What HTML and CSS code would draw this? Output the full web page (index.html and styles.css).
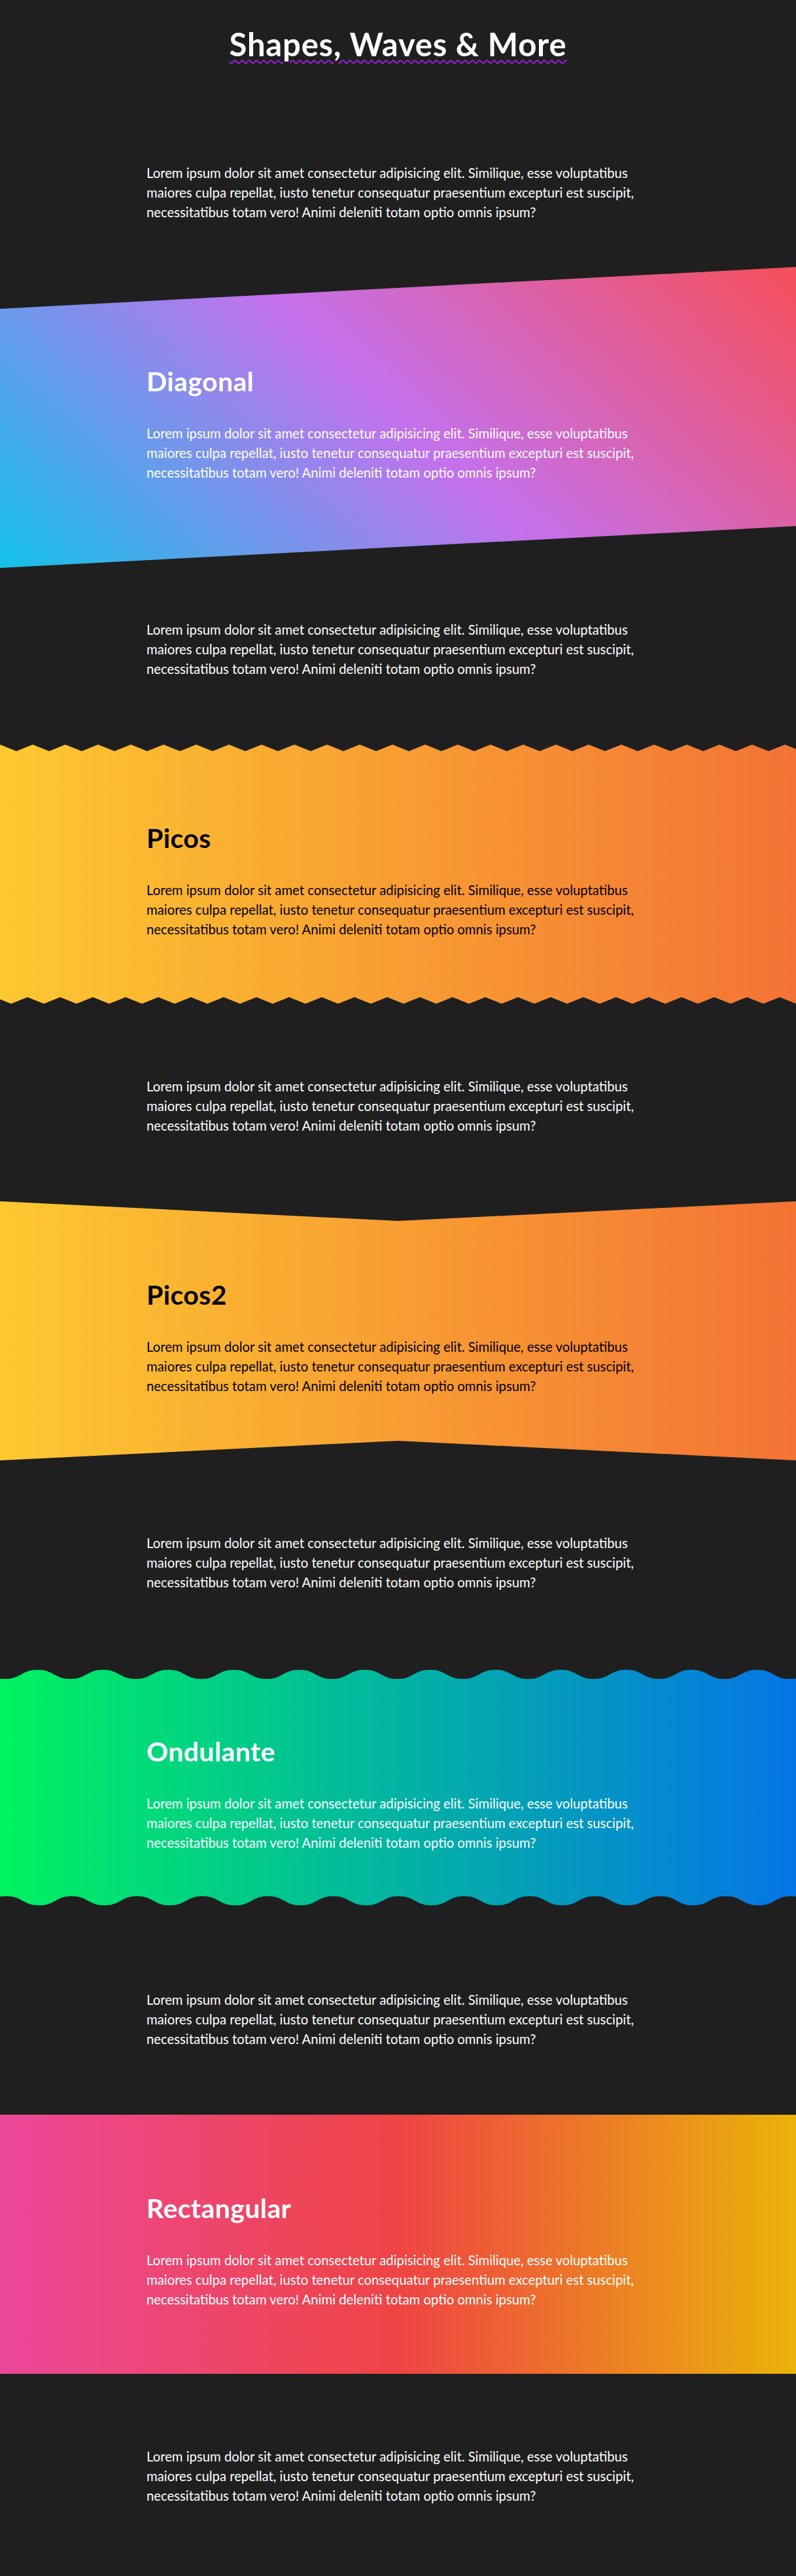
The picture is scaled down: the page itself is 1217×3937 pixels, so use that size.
FILE: index.html
```html
<!DOCTYPE html>
<html lang="es">
<head>
<meta charset="utf-8">
<title>Shapes, Waves &amp; More</title>
<link rel="stylesheet" href="styles.css">
</head>
<body>
<header class="page-header">
  <h1 class="page-title">Shapes, Waves &amp; More</h1>
</header>

<section class="band band--plain">
  <div class="container">
    <p class="copy">Lorem ipsum dolor sit amet consectetur adipisicing elit. Similique, esse voluptatibus maiores culpa repellat, iusto tenetur consequatur praesentium excepturi est suscipit, necessitatibus totam vero! Animi deleniti totam optio omnis ipsum?</p>
  </div>
</section>

<section class="band band--shape band--diagonal">
  <div class="container">
    <h2 class="band-title">Diagonal</h2>
    <p class="copy">Lorem ipsum dolor sit amet consectetur adipisicing elit. Similique, esse voluptatibus maiores culpa repellat, iusto tenetur consequatur praesentium excepturi est suscipit, necessitatibus totam vero! Animi deleniti totam optio omnis ipsum?</p>
  </div>
</section>

<section class="band band--plain">
  <div class="container">
    <p class="copy">Lorem ipsum dolor sit amet consectetur adipisicing elit. Similique, esse voluptatibus maiores culpa repellat, iusto tenetur consequatur praesentium excepturi est suscipit, necessitatibus totam vero! Animi deleniti totam optio omnis ipsum?</p>
  </div>
</section>

<section class="band band--shape band--picos">
  <svg class="edge edge--top edge--zigzag" height="10" aria-hidden="true">
    <defs><pattern id="zz-top" width="50" height="10" patternUnits="userSpaceOnUse"><path d="M0 0H50L25 10Z" class="edge-fill"/></pattern></defs>
    <rect width="100%" height="10" fill="url(#zz-top)"/>
  </svg>
  <div class="container">
    <h2 class="band-title">Picos</h2>
    <p class="copy">Lorem ipsum dolor sit amet consectetur adipisicing elit. Similique, esse voluptatibus maiores culpa repellat, iusto tenetur consequatur praesentium excepturi est suscipit, necessitatibus totam vero! Animi deleniti totam optio omnis ipsum?</p>
  </div>
  <svg class="edge edge--bottom edge--zigzag" height="10" aria-hidden="true">
    <defs><pattern id="zz-bot" width="50" height="10" patternUnits="userSpaceOnUse"><path d="M0 0H50L25 10Z" class="edge-fill"/></pattern></defs>
    <rect width="100%" height="10" fill="url(#zz-bot)"/>
  </svg>
</section>

<section class="band band--plain">
  <div class="container">
    <p class="copy">Lorem ipsum dolor sit amet consectetur adipisicing elit. Similique, esse voluptatibus maiores culpa repellat, iusto tenetur consequatur praesentium excepturi est suscipit, necessitatibus totam vero! Animi deleniti totam optio omnis ipsum?</p>
  </div>
</section>

<section class="band band--shape band--picos2">
  <div class="container">
    <h2 class="band-title">Picos2</h2>
    <p class="copy">Lorem ipsum dolor sit amet consectetur adipisicing elit. Similique, esse voluptatibus maiores culpa repellat, iusto tenetur consequatur praesentium excepturi est suscipit, necessitatibus totam vero! Animi deleniti totam optio omnis ipsum?</p>
  </div>
</section>

<section class="band band--plain">
  <div class="container">
    <p class="copy">Lorem ipsum dolor sit amet consectetur adipisicing elit. Similique, esse voluptatibus maiores culpa repellat, iusto tenetur consequatur praesentium excepturi est suscipit, necessitatibus totam vero! Animi deleniti totam optio omnis ipsum?</p>
  </div>
</section>

<section class="band band--shape band--wave">
  <svg class="edge edge--top edge--wavy" height="32" aria-hidden="true">
    <defs><pattern id="wv-top" x="7.5" width="100" height="32" patternUnits="userSpaceOnUse"><path d="M0 0H100V32C75 32 75 18 50 18C25 18 25 32 0 32Z" class="edge-fill"/></pattern></defs>
    <rect width="100%" height="32" fill="url(#wv-top)"/>
  </svg>
  <div class="container">
    <h2 class="band-title">Ondulante</h2>
    <p class="copy">Lorem ipsum dolor sit amet consectetur adipisicing elit. Similique, esse voluptatibus maiores culpa repellat, iusto tenetur consequatur praesentium excepturi est suscipit, necessitatibus totam vero! Animi deleniti totam optio omnis ipsum?</p>
  </div>
  <svg class="edge edge--bottom edge--wavy" height="32" aria-hidden="true">
    <defs><pattern id="wv-bot" x="7.5" width="100" height="32" patternUnits="userSpaceOnUse"><path d="M0 0H100V32C75 32 75 18 50 18C25 18 25 32 0 32Z" class="edge-fill"/></pattern></defs>
    <rect width="100%" height="32" fill="url(#wv-bot)"/>
  </svg>
</section>

<section class="band band--plain">
  <div class="container">
    <p class="copy">Lorem ipsum dolor sit amet consectetur adipisicing elit. Similique, esse voluptatibus maiores culpa repellat, iusto tenetur consequatur praesentium excepturi est suscipit, necessitatibus totam vero! Animi deleniti totam optio omnis ipsum?</p>
  </div>
</section>

<section class="band band--shape band--rect">
  <div class="container">
    <h2 class="band-title">Rectangular</h2>
    <p class="copy">Lorem ipsum dolor sit amet consectetur adipisicing elit. Similique, esse voluptatibus maiores culpa repellat, iusto tenetur consequatur praesentium excepturi est suscipit, necessitatibus totam vero! Animi deleniti totam optio omnis ipsum?</p>
  </div>
</section>

<section class="band band--plain">
  <div class="container">
    <p class="copy">Lorem ipsum dolor sit amet consectetur adipisicing elit. Similique, esse voluptatibus maiores culpa repellat, iusto tenetur consequatur praesentium excepturi est suscipit, necessitatibus totam vero! Animi deleniti totam optio omnis ipsum?</p>
  </div>
</section>
</body>
</html>
```

FILE: styles.css
```css
* { box-sizing: border-box; }

html, body {
  margin: 0;
  padding: 0;
}

body {
  background: #1f1f1f;
  color: #fff;
  font-family: Lato, "Open Sans", "Noto Sans", sans-serif;
  padding-bottom: 7px;
}

.page-header {
  padding: 38px 16px 42px;
  text-align: center;
}

.page-title {
  margin: 0;
  font-size: 49px;
  line-height: 58px;
  letter-spacing: 0.8px;
  font-weight: 700;
  text-decoration: underline wavy #a21ce8;
  text-decoration-thickness: 2px;
  text-underline-offset: 5px;
}

.container {
  max-width: 769px;
  margin: 0 auto;
}

.copy {
  margin: 0;
  font-size: 20.3px;
  line-height: 30px;
}

.band {
  position: relative;
}

.band--plain {
  padding: 111px 0 101px;
}

.band--shape {
  padding: 119px 0 99px;
  isolation: isolate;
}

.band-title {
  margin: 0 0 40px;
  font-size: 41px;
  line-height: 48px;
  letter-spacing: 0.4px;
  font-weight: 700;
}

/* Diagonal */
.band--diagonal::before {
  content: "";
  position: absolute;
  inset: 0;
  z-index: -1;
  background: linear-gradient(45deg, #12c2e9, #c471ed, #f64f59);
  transform: skewY(-3deg);
}

/* Picos (zig-zag) */
.band--picos {
  background: linear-gradient(to right, #fdc830, #f37335);
  color: #000;
}

/* Picos2 (chevron) */
.band--picos2 {
  background: linear-gradient(to right, #fdc830, #f37335);
  color: #000;
  clip-path: polygon(0 0, 50% 30px, 100% 0, 100% 100%, 50% calc(100% - 30px), 0 100%);
}

/* Ondulante */
.band--wave {
  background: linear-gradient(to right, #00f260, #0575e6);
}

/* Rectangular */
.band--rect {
  background: linear-gradient(to right, #ec4899, #ef4444, #eab308);
}

.edge {
  position: absolute;
  left: 0;
  width: 100%;
  display: block;
}

.edge--top { top: 0; }

.edge--bottom {
  bottom: 0;
  transform: rotate(180deg);
}

.edge-fill { fill: #1f1f1f; }
```
